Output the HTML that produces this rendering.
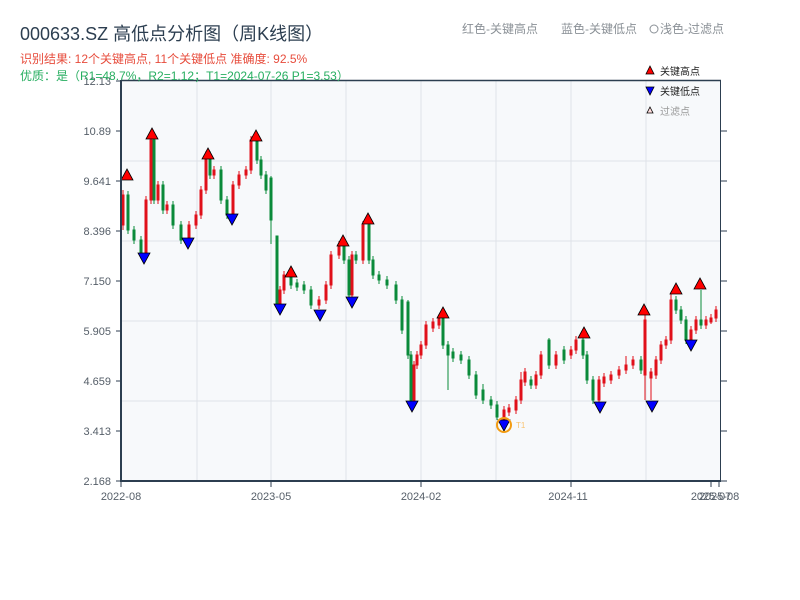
<!DOCTYPE html>
<html><head><meta charset="utf-8"><style>
html,body{margin:0;padding:0;background:#fff;width:800px;height:600px;overflow:hidden}
</style></head><body>
<svg width="800" height="600" xmlns="http://www.w3.org/2000/svg" style="position:absolute;left:0;top:0;font-family:'Liberation Sans','Noto Sans CJK SC',sans-serif">
<rect x="121" y="81" width="600" height="400" fill="#f7f9fb"/>
<g stroke="#dfe3e8" stroke-width="1">
<line x1="197" y1="81" x2="197" y2="481"/><line x1="271" y1="81" x2="271" y2="481"/><line x1="346" y1="81" x2="346" y2="481"/><line x1="421" y1="81" x2="421" y2="481"/><line x1="496" y1="81" x2="496" y2="481"/><line x1="571" y1="81" x2="571" y2="481"/><line x1="646" y1="81" x2="646" y2="481"/>
<line x1="121" y1="161" x2="721" y2="161"/><line x1="121" y1="241" x2="721" y2="241"/><line x1="121" y1="321" x2="721" y2="321"/><line x1="121" y1="401" x2="721" y2="401"/>
</g>
<!-- red (up) candles -->
<g fill="#e0101a" stroke="#e0101a" stroke-width="1">
<line x1="123" y1="190" x2="123" y2="230"/><rect x="122" y="195" width="2" height="30"/>
<line x1="146" y1="196" x2="146" y2="259"/><rect x="145" y="200" width="2" height="55"/>
<line x1="151" y1="136" x2="151" y2="204"/><rect x="150" y="140" width="2" height="60"/>
<line x1="158" y1="181" x2="158" y2="204"/><rect x="157" y="185" width="2" height="15"/>
<line x1="167" y1="201" x2="167" y2="214"/><rect x="166" y="205" width="2" height="5"/>
<line x1="189" y1="221" x2="189" y2="244"/><rect x="188" y="225" width="2" height="15"/>
<line x1="196" y1="211" x2="196" y2="229"/><rect x="195" y="215" width="2" height="10"/>
<line x1="201" y1="186" x2="201" y2="219"/><rect x="200" y="190" width="2" height="25"/>
<line x1="206" y1="151" x2="206" y2="194"/><rect x="205" y="155" width="2" height="35"/>
<line x1="214" y1="166" x2="214" y2="179"/><rect x="213" y="170" width="2" height="5"/>
<line x1="233" y1="181" x2="233" y2="219"/><rect x="232" y="185" width="2" height="30"/>
<line x1="239" y1="171" x2="239" y2="189"/><rect x="238" y="175" width="2" height="10"/>
<line x1="246" y1="166" x2="246" y2="179"/><rect x="245" y="170" width="2" height="5"/>
<line x1="251" y1="136" x2="251" y2="174"/><rect x="250" y="140" width="2" height="30"/>
<line x1="280" y1="286" x2="280" y2="309"/><rect x="279" y="290" width="2" height="15"/>
<line x1="284" y1="271" x2="284" y2="294"/><rect x="283" y="275" width="2" height="15"/>
<line x1="319" y1="296" x2="319" y2="309"/><rect x="318" y="300" width="2" height="5"/>
<line x1="326" y1="281" x2="326" y2="304"/><rect x="325" y="285" width="2" height="15"/>
<line x1="331" y1="251" x2="331" y2="289"/><rect x="330" y="255" width="2" height="30"/>
<line x1="339" y1="241" x2="339" y2="259"/><rect x="338" y="245" width="2" height="10"/>
<line x1="352" y1="251" x2="352" y2="299"/><rect x="351" y="255" width="2" height="40"/>
<line x1="363" y1="221" x2="363" y2="264"/><rect x="362" y="225" width="2" height="35"/>
<line x1="414" y1="361" x2="414" y2="404"/><rect x="413" y="365" width="2" height="35"/>
<line x1="417" y1="351" x2="417" y2="369"/><rect x="416" y="355" width="2" height="10"/>
<line x1="421" y1="341" x2="421" y2="359"/><rect x="420" y="345" width="2" height="10"/>
<line x1="426" y1="321" x2="426" y2="349"/><rect x="425" y="325" width="2" height="20"/>
<line x1="433" y1="318" x2="433" y2="332"/><rect x="432" y="322" width="2" height="6"/>
<line x1="439" y1="314" x2="439" y2="329"/><rect x="438" y="318" width="2" height="7"/>
<line x1="504" y1="406" x2="504" y2="424"/><rect x="503" y="410" width="2" height="10"/>
<line x1="509" y1="404" x2="509" y2="416"/><rect x="508" y="408" width="2" height="4"/>
<line x1="516" y1="396" x2="516" y2="414"/><rect x="515" y="400" width="2" height="10"/>
<line x1="521" y1="372" x2="521" y2="404"/><rect x="520" y="380" width="2" height="20"/>
<line x1="525" y1="368" x2="525" y2="386"/><rect x="524" y="372" width="2" height="10"/>
<line x1="536" y1="371" x2="536" y2="389"/><rect x="535" y="375" width="2" height="10"/>
<line x1="541" y1="351" x2="541" y2="379"/><rect x="540" y="355" width="2" height="20"/>
<line x1="556" y1="351" x2="556" y2="369"/><rect x="555" y="355" width="2" height="10"/>
<line x1="571" y1="346" x2="571" y2="359"/><rect x="570" y="350" width="2" height="5"/>
<line x1="576" y1="336" x2="576" y2="354"/><rect x="575" y="340" width="2" height="10"/>
<line x1="599" y1="376" x2="599" y2="404"/><rect x="598" y="380" width="2" height="20"/>
<line x1="604" y1="373" x2="604" y2="387"/><rect x="603" y="377" width="2" height="6"/>
<line x1="611" y1="371" x2="611" y2="384"/><rect x="610" y="375" width="2" height="5"/>
<line x1="619" y1="366" x2="619" y2="379"/><rect x="618" y="370" width="2" height="5"/>
<line x1="626" y1="356" x2="626" y2="374"/><rect x="625" y="365" width="2" height="5"/>
<line x1="633" y1="356" x2="633" y2="369"/><rect x="632" y="360" width="2" height="5"/>
<line x1="645" y1="315" x2="645" y2="400"/><rect x="644" y="320" width="2" height="55"/>
<line x1="651" y1="368" x2="651" y2="400"/><rect x="650" y="372" width="2" height="6"/>
<line x1="656" y1="356" x2="656" y2="379"/><rect x="655" y="360" width="2" height="15"/>
<line x1="661" y1="341" x2="661" y2="364"/><rect x="660" y="345" width="2" height="15"/>
<line x1="666" y1="336" x2="666" y2="349"/><rect x="665" y="340" width="2" height="5"/>
<line x1="671" y1="294" x2="671" y2="344"/><rect x="670" y="300" width="2" height="40"/>
<line x1="691" y1="326" x2="691" y2="344"/><rect x="690" y="330" width="2" height="10"/>
<line x1="696" y1="316" x2="696" y2="334"/><rect x="695" y="320" width="2" height="10"/>
<line x1="706" y1="316" x2="706" y2="329"/><rect x="705" y="320" width="2" height="5"/>
<line x1="711" y1="314" x2="711" y2="324"/><rect x="710" y="318" width="2" height="4"/>
<line x1="716" y1="306" x2="716" y2="322"/><rect x="715" y="310" width="2" height="8"/>
</g>
<!-- green (down) candles -->
<g fill="#0a8a3a" stroke="#0a8a3a" stroke-width="1">
<line x1="128" y1="191" x2="128" y2="234"/><rect x="127" y="195" width="2" height="35"/>
<line x1="134" y1="226" x2="134" y2="244"/><rect x="133" y="230" width="2" height="10"/>
<line x1="141" y1="236" x2="141" y2="259"/><rect x="140" y="240" width="2" height="15"/>
<line x1="154" y1="136" x2="154" y2="204"/><rect x="153" y="140" width="2" height="60"/>
<line x1="163" y1="181" x2="163" y2="214"/><rect x="162" y="185" width="2" height="25"/>
<line x1="173" y1="201" x2="173" y2="229"/><rect x="172" y="205" width="2" height="20"/>
<line x1="181" y1="221" x2="181" y2="244"/><rect x="180" y="225" width="2" height="15"/>
<line x1="210" y1="151" x2="210" y2="179"/><rect x="209" y="155" width="2" height="20"/>
<line x1="221" y1="166" x2="221" y2="204"/><rect x="220" y="170" width="2" height="30"/>
<line x1="227" y1="196" x2="227" y2="219"/><rect x="226" y="200" width="2" height="15"/>
<line x1="257" y1="136" x2="257" y2="164"/><rect x="256" y="140" width="2" height="20"/>
<line x1="261" y1="156" x2="261" y2="179"/><rect x="260" y="160" width="2" height="15"/>
<line x1="266" y1="171" x2="266" y2="194"/><rect x="265" y="175" width="2" height="15"/>
<line x1="271" y1="176" x2="271" y2="244"/><rect x="270" y="178" width="2" height="42"/>
<line x1="277" y1="236" x2="277" y2="309"/><rect x="276" y="236" width="2" height="69"/>
<line x1="291" y1="271" x2="291" y2="289"/><rect x="290" y="275" width="2" height="10"/>
<line x1="297" y1="279" x2="297" y2="291"/><rect x="296" y="283" width="2" height="4"/>
<line x1="304" y1="281" x2="304" y2="294"/><rect x="303" y="285" width="2" height="5"/>
<line x1="311" y1="286" x2="311" y2="309"/><rect x="310" y="290" width="2" height="15"/>
<line x1="344" y1="241" x2="344" y2="264"/><rect x="343" y="245" width="2" height="15"/>
<line x1="349" y1="256" x2="349" y2="299"/><rect x="348" y="260" width="2" height="35"/>
<line x1="356" y1="251" x2="356" y2="264"/><rect x="355" y="255" width="2" height="5"/>
<line x1="369" y1="221" x2="369" y2="264"/><rect x="368" y="225" width="2" height="35"/>
<line x1="373" y1="256" x2="373" y2="279"/><rect x="372" y="260" width="2" height="15"/>
<line x1="379" y1="271" x2="379" y2="284"/><rect x="378" y="275" width="2" height="5"/>
<line x1="387" y1="276" x2="387" y2="289"/><rect x="386" y="280" width="2" height="5"/>
<line x1="396" y1="281" x2="396" y2="304"/><rect x="395" y="285" width="2" height="15"/>
<line x1="402" y1="296" x2="402" y2="334"/><rect x="401" y="300" width="2" height="30"/>
<line x1="408" y1="300" x2="408" y2="359"/><rect x="407" y="302" width="2" height="53"/>
<line x1="411" y1="351" x2="411" y2="404"/><rect x="410" y="355" width="2" height="45"/>
<line x1="443" y1="314" x2="443" y2="349"/><rect x="442" y="318" width="2" height="27"/>
<line x1="448" y1="341" x2="448" y2="390"/><rect x="447" y="345" width="2" height="10"/>
<line x1="453" y1="348" x2="453" y2="362"/><rect x="452" y="352" width="2" height="6"/>
<line x1="461" y1="351" x2="461" y2="364"/><rect x="460" y="355" width="2" height="5"/>
<line x1="469" y1="356" x2="469" y2="379"/><rect x="468" y="360" width="2" height="15"/>
<line x1="476" y1="371" x2="476" y2="399"/><rect x="475" y="375" width="2" height="20"/>
<line x1="483" y1="384" x2="483" y2="404"/><rect x="482" y="390" width="2" height="10"/>
<line x1="491" y1="396" x2="491" y2="409"/><rect x="490" y="400" width="2" height="5"/>
<line x1="497" y1="401" x2="497" y2="420"/><rect x="496" y="405" width="2" height="12"/>
<line x1="531" y1="376" x2="531" y2="389"/><rect x="530" y="380" width="2" height="5"/>
<line x1="549" y1="338" x2="549" y2="369"/><rect x="548" y="340" width="2" height="25"/>
<line x1="564" y1="346" x2="564" y2="364"/><rect x="563" y="350" width="2" height="10"/>
<line x1="583" y1="336" x2="583" y2="359"/><rect x="582" y="340" width="2" height="15"/>
<line x1="587" y1="351" x2="587" y2="384"/><rect x="586" y="355" width="2" height="25"/>
<line x1="593" y1="376" x2="593" y2="404"/><rect x="592" y="380" width="2" height="20"/>
<line x1="641" y1="356" x2="641" y2="374"/><rect x="640" y="360" width="2" height="10"/>
<line x1="676" y1="296" x2="676" y2="314"/><rect x="675" y="300" width="2" height="10"/>
<line x1="681" y1="306" x2="681" y2="324"/><rect x="680" y="310" width="2" height="10"/>
<line x1="686" y1="316" x2="686" y2="344"/><rect x="685" y="320" width="2" height="20"/>
<line x1="701" y1="290" x2="701" y2="329"/><rect x="700" y="320" width="2" height="5"/>
</g>
<!-- markers -->
<g stroke="#000" stroke-width="0.8" fill="#f00">
<polygon points="127,169 133,180 121,180"/><polygon points="152,128 158,139 146,139"/><polygon points="208,148 214,159 202,159"/><polygon points="256,130 262,141 250,141"/><polygon points="291,266 297,277 285,277"/><polygon points="343,235 349,246 337,246"/><polygon points="368,213 374,224 362,224"/><polygon points="443,307 449,318 437,318"/><polygon points="584,327 590,338 578,338"/><polygon points="644,304 650,315 638,315"/><polygon points="676,283 682,294 670,294"/><polygon points="700,278 706,289 694,289"/>
</g>
<g stroke="#000" stroke-width="0.8" fill="#00f">
<polygon points="138,253 150,253 144,264"/><polygon points="182,238 194,238 188,249"/><polygon points="226,214 238,214 232,225"/><polygon points="274,304 286,304 280,315"/><polygon points="314,310 326,310 320,321"/><polygon points="346,297 358,297 352,308"/><polygon points="406,401 418,401 412,412"/><polygon points="498,420 510,420 504,431"/><polygon points="594,402 606,402 600,413"/><polygon points="646,401 658,401 652,412"/><polygon points="685,340 697,340 691,351"/>
</g>
<circle cx="504" cy="425" r="7" fill="none" stroke="#f39c12" stroke-width="2"/>
<text x="516" y="428" font-size="8" fill="#f8c471">T1</text>
<g stroke="#2c3e50">
<line x1="121" y1="80.5" x2="721" y2="80.5" stroke-width="1.5"/>
<line x1="121" y1="80" x2="121" y2="482" stroke-width="2"/>
<line x1="120" y1="481" x2="721" y2="481" stroke-width="2"/>
<line x1="720.5" y1="80" x2="720.5" y2="481" stroke-width="1"/>
<g stroke-width="1">
<line x1="116" y1="81" x2="121" y2="81"/><line x1="116" y1="131" x2="121" y2="131"/><line x1="116" y1="181" x2="121" y2="181"/><line x1="116" y1="231" x2="121" y2="231"/><line x1="116" y1="281" x2="121" y2="281"/><line x1="116" y1="331" x2="121" y2="331"/><line x1="116" y1="381" x2="121" y2="381"/><line x1="116" y1="431" x2="121" y2="431"/><line x1="116" y1="481" x2="121" y2="481"/>
<line x1="721" y1="131" x2="727" y2="131"/><line x1="721" y1="181" x2="727" y2="181"/><line x1="721" y1="231" x2="727" y2="231"/><line x1="721" y1="281" x2="727" y2="281"/><line x1="721" y1="331" x2="727" y2="331"/><line x1="721" y1="381" x2="727" y2="381"/><line x1="721" y1="431" x2="727" y2="431"/><line x1="721" y1="481" x2="727" y2="481"/>
<line x1="121" y1="481" x2="121" y2="487"/><line x1="271" y1="481" x2="271" y2="487"/><line x1="421" y1="481" x2="421" y2="487"/><line x1="571" y1="481" x2="571" y2="487"/><line x1="711" y1="481" x2="711" y2="487"/><line x1="719" y1="481" x2="719" y2="487"/>
</g></g>
<g font-size="11" fill="#555e68" text-anchor="end">
<text x="111" y="85">12.13</text><text x="111" y="135">10.89</text><text x="111" y="185">9.641</text><text x="111" y="235">8.396</text><text x="111" y="285">7.150</text><text x="111" y="335">5.905</text><text x="111" y="385">4.659</text><text x="111" y="435">3.413</text><text x="111" y="485">2.168</text>
</g>
<g font-size="11" fill="#555e68" text-anchor="middle">
<text x="121" y="500">2022-08</text><text x="271" y="500">2023-05</text><text x="421" y="500">2024-02</text><text x="568" y="500">2024-11</text><text x="711" y="500">2025-07</text><text x="719" y="500">2025-08</text>
</g>
<text x="20" y="40" font-size="18" fill="#2c3e50">000633.SZ 高低点分析图（周K线图）</text>
<text x="20" y="63" font-size="12" fill="#e74c3c">识别结果: 12个关键高点, 11个关键低点  准确度: 92.5%</text>
<text x="20" y="80" font-size="12" fill="#27ae60">优质：是（R1=48.7%，R2=1.12；T1=2024-07-26 P1=3.53）</text>
<text x="462" y="33" font-size="12" fill="#8a9096">红色-关键高点</text>
<text x="561" y="33" font-size="12" fill="#8a9096">蓝色-关键低点</text>
<circle cx="654" cy="29" r="4" fill="none" stroke="#8a9096" stroke-width="1"/>
<text x="660" y="33" font-size="12" fill="#8a9096">浅色-过滤点</text>
<polygon points="650,66 654,74 646,74" fill="#f00" stroke="#000" stroke-width="0.8"/>
<text x="660" y="75" font-size="10" fill="#222">关键高点</text>
<polygon points="646,87 654,87 650,95" fill="#00f" stroke="#000" stroke-width="0.8"/>
<text x="660" y="95" font-size="10" fill="#222">关键低点</text>
<polygon points="650,107 653,113 647,113" fill="#fdd" stroke="#000" stroke-width="0.8"/>
<text x="660" y="115" font-size="10" fill="#999">过滤点</text>
</svg>
</body></html>
